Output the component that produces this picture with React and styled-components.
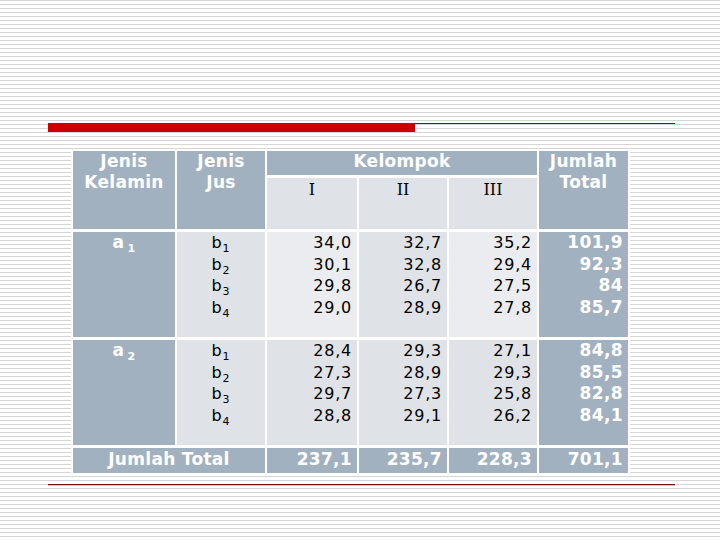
import React from "react";
import styled, { createGlobalStyle } from "styled-components";

const GlobalStyle = createGlobalStyle`
  html, body { margin: 0; padding: 0; }
  body {
    background: #fff;
    font-family: "DejaVu Sans", Verdana, sans-serif;
  }
`;

const TONES = {
  dark: "#a2b1c0",
  mid: "#dfe2e6",
  light: "#eaecef",
};

const groups = [
  {
    label: "1",
    tones: ["light", "mid", "light"],
    cols: [
      ["34,0", "30,1", "29,8", "29,0"],
      ["32,7", "32,8", "26,7", "28,9"],
      ["35,2", "29,4", "27,5", "27,8"],
    ],
    total: ["101,9", "92,3", "84", "85,7"],
  },
  {
    label: "2",
    tones: ["mid", "mid", "mid"],
    cols: [
      ["28,4", "27,3", "29,7", "28,8"],
      ["29,3", "28,9", "27,3", "29,1"],
      ["27,1", "29,3", "25,8", "26,2"],
    ],
    total: ["84,8", "85,5", "82,8", "84,1"],
  },
];

const totals = ["237,1", "235,7", "228,3", "701,1"];

const Slide = styled.div`
  width: 720px;
  height: 540px;
  box-sizing: border-box;
  padding: 123px 0 0 48px;
  display: flex;
  flex-direction: column;
  align-items: flex-start;
  overflow: hidden;
  background: repeating-linear-gradient(
    to bottom,
    #d6d6d6 0 1px,
    #ffffff 1px 4px
  );
`;

const TitleRule = styled.div`
  display: flex;
  width: 627px;
  height: 9px;
`;

const RedBar = styled.div`
  width: 367px;
  background: #cc0000;
`;

const Hairline = styled.div`
  flex: 1;
  border-top: 1px solid #7d1414;
`;

const DataGrid = styled.div`
  margin: 17px 0 0 23px;
  padding: 2px;
  background: #fff;
  display: grid;
  grid-template-columns: 102px 88px 90px 88px 88px 89px;
  grid-template-rows: 24px 51px 105px 105px 25px;
  column-gap: 2px;
  row-gap: 3px;
`;

const FooterRule = styled.div`
  margin-top: 9px;
  width: 627px;
  height: 1px;
  border-top: 1px solid #6e1414;
  background: #e6b8b8;
`;

const Cell = styled.div`
  grid-column: ${(p) => p.$col};
  grid-row: ${(p) => p.$row};
  background: ${(p) => TONES[p.$tone]};
  color: ${(p) => (p.$tone === "dark" ? "#fff" : "#000")};
  box-sizing: border-box;
`;

const HeadCell = styled(Cell)`
  font-size: 17px;
  font-weight: bold;
  letter-spacing: 0.3px;
  line-height: 21px;
  text-align: center;
`;

const RomanCell = styled(Cell)`
  padding-top: 1px;
  font-family: "DejaVu Serif", "Liberation Serif", serif;
  font-size: 16px;
  line-height: 21px;
  text-align: center;
`;

const ListCell = styled(Cell)`
  font-size: ${(p) => (p.$tone === "dark" ? "17px" : "16px")};
  font-weight: ${(p) => (p.$tone === "dark" ? "bold" : "normal")};
  letter-spacing: ${(p) => (p.$tone === "dark" ? "0.4px" : "0.8px")};
  line-height: 21.7px;
  text-align: ${(p) => (p.$right ? "right" : "center")};
  padding-right: ${(p) => (p.$right ? "5px" : "0")};
`;

const TotalCell = styled(Cell)`
  font-size: 17px;
  font-weight: bold;
  letter-spacing: 0.3px;
  line-height: 23px;
  text-align: ${(p) => (p.$right ? "right" : "center")};
  padding-right: ${(p) => (p.$right ? "5px" : "0")};
`;

const Line = styled.div``;

const Sub = styled.span`
  font-size: 11px;
  line-height: 0;
  vertical-align: -4px;
  margin-left: ${(p) => (p.$gap ? "3px" : "0")};
`;

export default function App() {
  return (
    <>
      <GlobalStyle />
      <Slide>
        <TitleRule>
          <RedBar />
          <Hairline />
        </TitleRule>

        <DataGrid>
          <HeadCell $col="1" $row="1 / 3" $tone="dark">
            Jenis
            <br />
            Kelamin
          </HeadCell>
          <HeadCell $col="2" $row="1 / 3" $tone="dark">
            Jenis
            <br />
            Jus
          </HeadCell>
          <HeadCell $col="3 / 6" $row="1" $tone="dark">
            Kelompok
          </HeadCell>
          <HeadCell $col="6" $row="1 / 3" $tone="dark">
            Jumlah
            <br />
            Total
          </HeadCell>
          {["I", "II", "III"].map((r, i) => (
            <RomanCell key={r} $col={String(3 + i)} $row="2" $tone="mid">
              {r}
            </RomanCell>
          ))}

          {groups.map((g, gi) => {
            const row = String(3 + gi);
            return (
              <React.Fragment key={g.label}>
                <ListCell $col="1" $row={row} $tone="dark">
                  a<Sub $gap>{g.label}</Sub>
                </ListCell>
                <ListCell $col="2" $row={row} $tone="mid">
                  {[1, 2, 3, 4].map((n) => (
                    <Line key={n}>
                      b<Sub>{n}</Sub>
                    </Line>
                  ))}
                </ListCell>
                {g.cols.map((vals, ci) => (
                  <ListCell
                    key={ci}
                    $col={String(3 + ci)}
                    $row={row}
                    $tone={g.tones[ci]}
                    $right
                  >
                    {vals.map((v, vi) => (
                      <Line key={vi}>{v}</Line>
                    ))}
                  </ListCell>
                ))}
                <ListCell $col="6" $row={row} $tone="dark" $right>
                  {g.total.map((v, vi) => (
                    <Line key={vi}>{v}</Line>
                  ))}
                </ListCell>
              </React.Fragment>
            );
          })}

          <TotalCell $col="1 / 3" $row="5" $tone="dark">
            Jumlah Total
          </TotalCell>
          {totals.map((v, i) => (
            <TotalCell key={v} $col={String(3 + i)} $row="5" $tone="dark" $right>
              {v}
            </TotalCell>
          ))}
        </DataGrid>

        <FooterRule />
      </Slide>
    </>
  );
}
